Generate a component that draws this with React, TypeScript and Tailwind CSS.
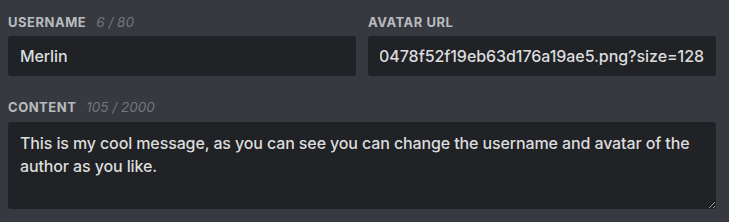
import React from "react";

export default function App() {
  const font = { fontFamily: 'Inter, "Liberation Sans", Arial, sans-serif' };
  return (
    <div className="w-[729px] h-[222px] bg-[#36393f] overflow-hidden" style={font}>
      <div className="pl-2 pr-[13px] pt-[14px]">
        <div className="grid grid-cols-2 gap-3">
          <div className="flex flex-col">
            <div className="h-4 flex items-center gap-[10px] mb-[6px] leading-4">
              <span className="text-[13px] font-bold uppercase tracking-[0.04em] text-[#b9bbbe]">Username</span>
              <span className="text-[13.5px] italic text-[#72767d]">6 / 80</span>
            </div>
            <input
              readOnly
              value="Merlin"
              className="h-10 w-full rounded-[3px] bg-[#202225] px-3 text-[16px] tracking-[-0.12px] font-medium text-[#dcddde] outline-none"
              style={font}
            />
          </div>
          <div className="flex flex-col">
            <div className="h-4 flex items-center gap-[10px] mb-[6px] leading-4">
              <span className="text-[13px] font-bold uppercase tracking-[0.04em] text-[#b9bbbe]">Avatar URL</span>
            </div>
            <div className="h-10 w-full rounded-[3px] bg-[#202225] px-3 flex items-center">
              <div className="w-full overflow-hidden whitespace-nowrap flex justify-end text-[16px] tracking-[-0.06px] font-medium text-[#dcddde]">
                <span className="shrink-0">https://cdn.discordapp.com/avatars/0478f52f19eb63d176a19ae5.png?size=128</span>
              </div>
            </div>
          </div>
        </div>
        <div className="mt-[23px] flex flex-col">
          <div className="h-4 flex items-center gap-[10px] mb-[7px] leading-4">
            <span className="text-[13px] font-bold uppercase tracking-[0.04em] text-[#b9bbbe]">Content</span>
            <span className="text-[13.5px] italic text-[#72767d]">105 / 2000</span>
          </div>
          <textarea
            readOnly
            value="This is my cool message, as you can see you can change the username and avatar of the author as you like."
            className="block h-[87px] w-full rounded-[3px] bg-[#202225] px-3 pt-[10px] text-[16px] tracking-[-0.12px] leading-[23px] font-medium text-[#dcddde] outline-none resize-y"
            style={font}
          />
        </div>
      </div>
    </div>
  );
}
